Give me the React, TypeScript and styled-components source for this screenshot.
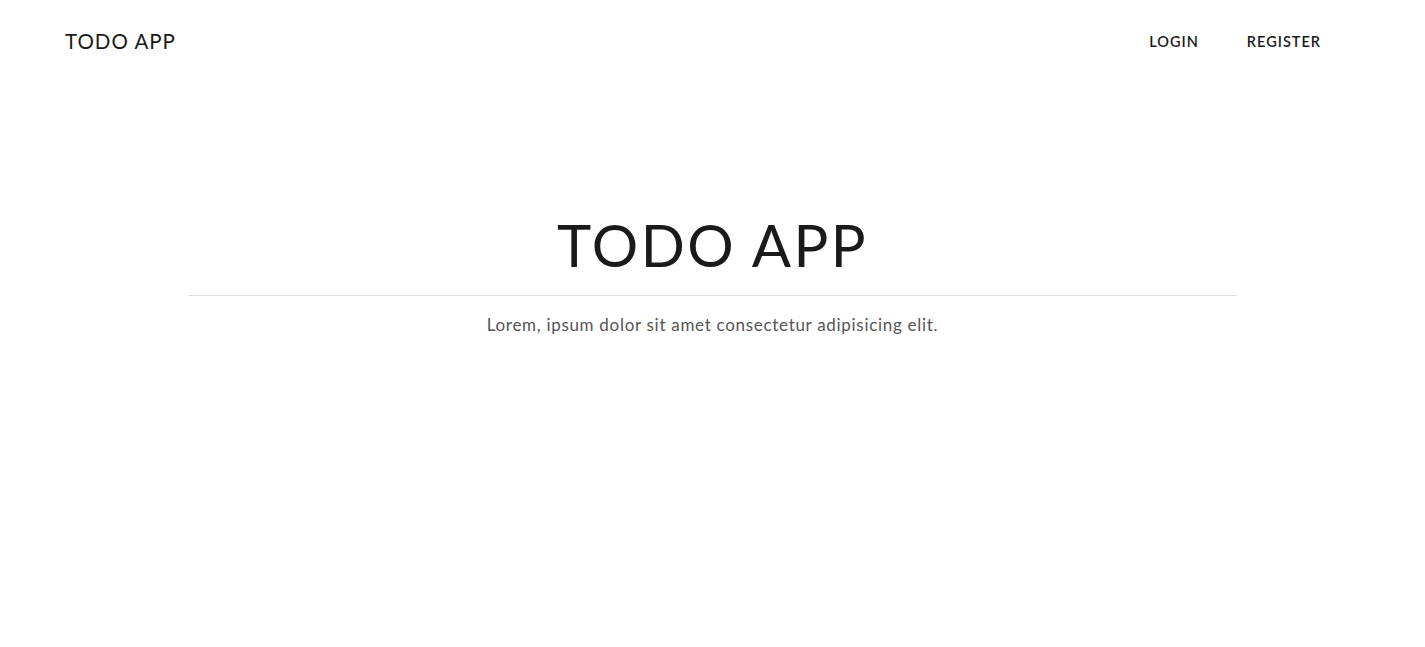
import styled, { createGlobalStyle } from 'styled-components';

const GlobalStyle = createGlobalStyle`
	* {
		box-sizing: border-box;
	}
	body {
		margin: 0;
		background: #fff;
		font-family: Lato, "Noto Sans", "Liberation Sans", sans-serif;
		color: #1a1a1a;
	}
`;

export default function App() {
	return (
		<>
			<GlobalStyle />
			<Header>
				<Brand>TODO APP</Brand>
				<Nav>
					<NavLink>LOGIN</NavLink>
					<NavLink>REGISTER</NavLink>
				</Nav>
			</Header>
			<Hero>
				<Title>TODO APP</Title>
				<Divider />
				<Lead>Lorem, ipsum dolor sit amet consectetur adipisicing elit.</Lead>
			</Hero>
		</>
	);
}

const Header = styled.header`
	display: flex;
	align-items: center;
	justify-content: space-between;
	height: 82px;
	padding: 0 104px 0 65px;
`;

const Brand = styled.div`
	font-size: 20.5px;
	letter-spacing: 1px;
	color: #1a1a1a;
`;

const Nav = styled.nav`
	display: flex;
	gap: 48px;
`;

const NavLink = styled.a`
	font-size: 14.5px;
	font-weight: 600;
	letter-spacing: 1px;
	color: #1a1a1a;
	cursor: pointer;
`;

const Hero = styled.section`
	display: flex;
	flex-direction: column;
	align-items: center;
	width: 1048px;
	margin: 134px auto 0;
`;

const Title = styled.h1`
	margin: 0;
	font-size: 58px;
	font-weight: 400;
	letter-spacing: 2.5px;
	line-height: 1;
	color: #1a1a1a;
`;

const Divider = styled.hr`
	width: 100%;
	margin: 21px 0 18px;
	border: none;
	border-top: 1px solid #ddd;
`;

const Lead = styled.p`
	margin: 0;
	font-size: 17px;
	letter-spacing: 0.7px;
	color: #555;
`;
